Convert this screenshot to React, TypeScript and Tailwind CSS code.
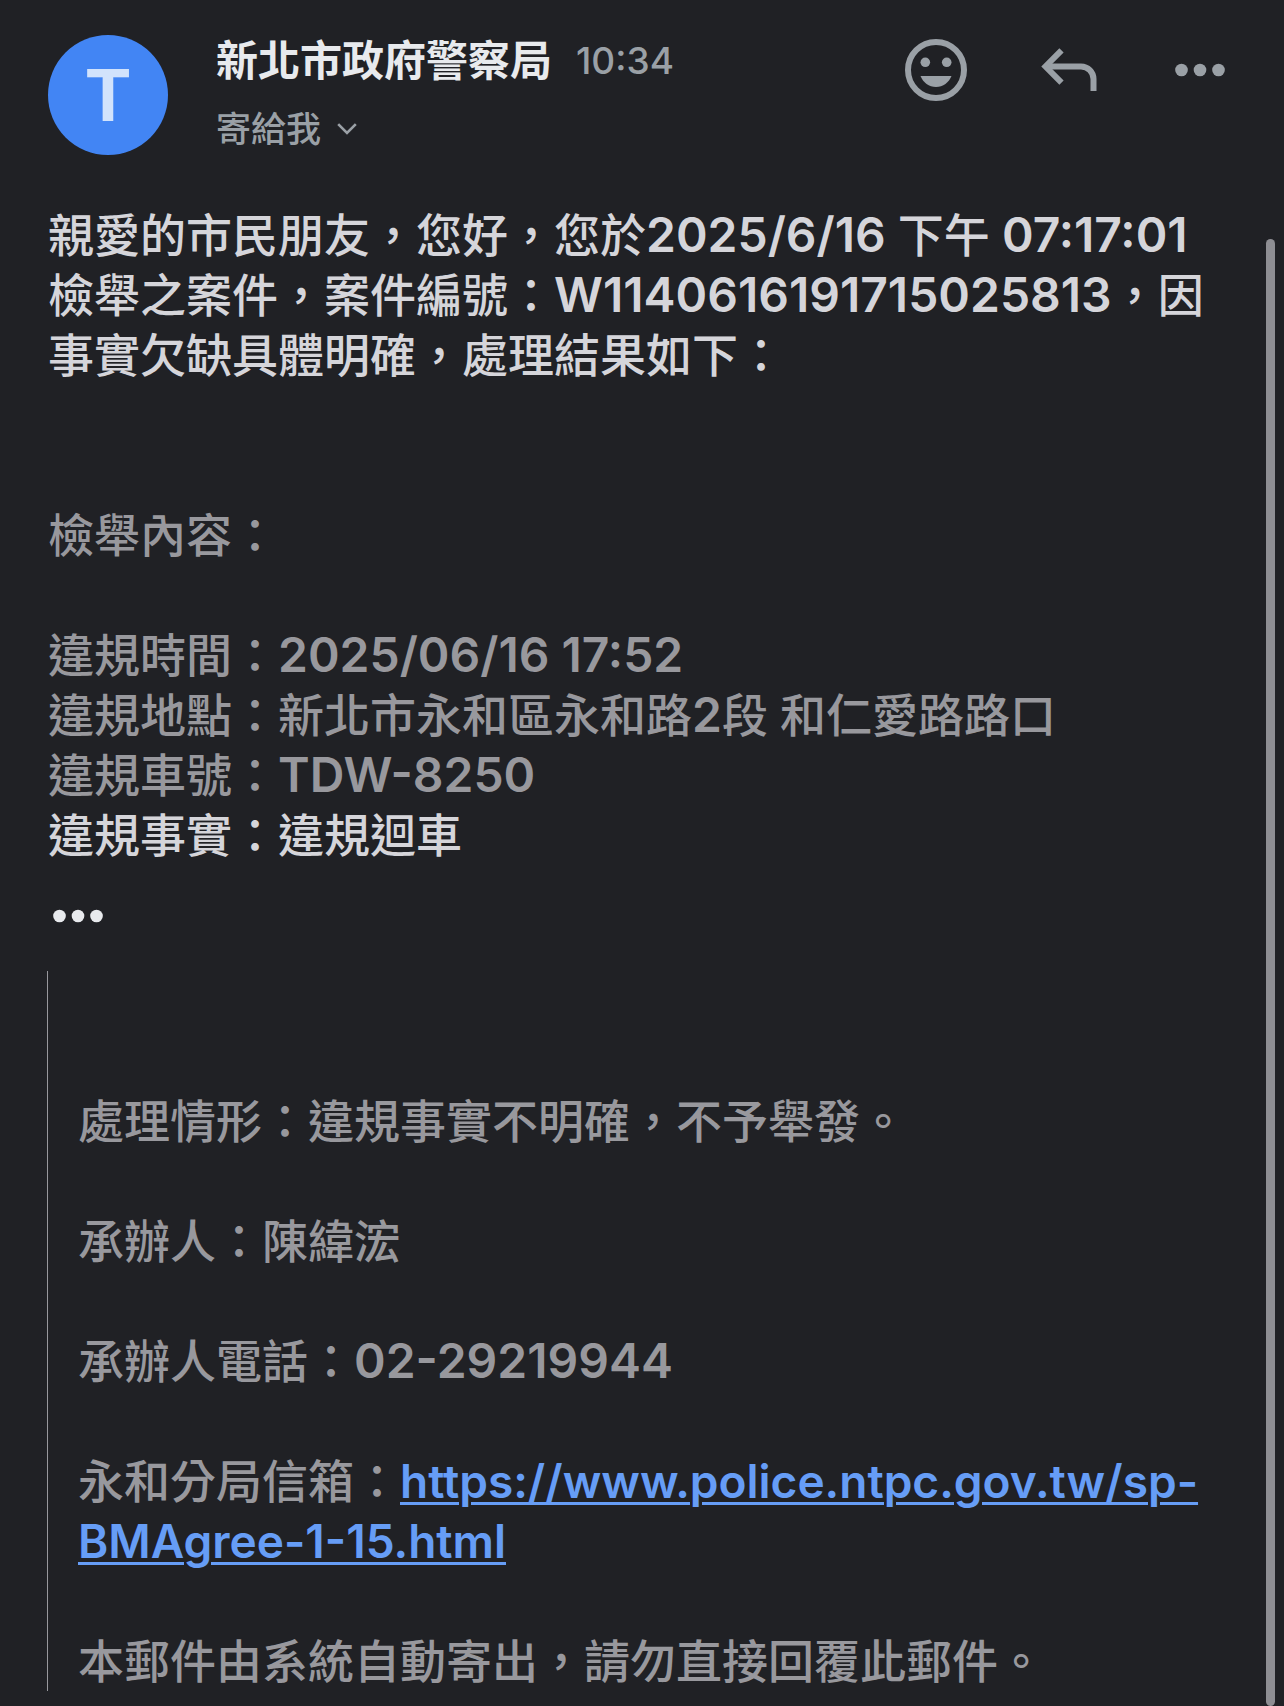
import type { ReactNode } from "react"

const SmileIcon = () => (
  <svg viewBox="0 0 62 62" className="size-[62px]" fill="currentColor" aria-hidden="true">
    <circle cx="31" cy="31" r="28" fill="none" stroke="currentColor" strokeWidth="6" />
    <circle cx="20.3" cy="23.3" r="4.8" />
    <circle cx="41.7" cy="23.3" r="4.8" />
    <path d="M15.5 37h31C44 43.500 38 48 31 48s-13-4.500-15.500-11z" />
  </svg>
)

const ReplyIcon = () => (
  <svg viewBox="0 0 56 44" className="h-[44px] w-[56px]" fill="none" stroke="currentColor" strokeWidth="6" aria-hidden="true">
    <path d="M20.500 2.300 4.500 18.500l16 16.200" />
    <path d="M4.500 18.500H40A12.500 12.500 0 0 1 52.500 31v12" />
  </svg>
)

const DotsIcon = ({ className }: { className?: string }) => (
  <svg viewBox="0 0 50 14" className={className} fill="currentColor" aria-hidden="true">
    <circle cx="6.500" cy="7" r="6.300" />
    <circle cx="25" cy="7" r="6.300" />
    <circle cx="43.500" cy="7" r="6.300" />
  </svg>
)

const ChevronIcon = () => (
  <svg viewBox="0 0 20 12" className="h-[12px] w-[20px]" fill="none" stroke="currentColor" strokeWidth="2.600" aria-hidden="true">
    <path d="M1.200 1.200 10 10l8.800-8.800" />
  </svg>
)

const Muted = ({ children }: { children: ReactNode }) => <p className="text-[#98989d]">{children}</p>

// dates, numbers and codes inside the Chinese text
const Num = ({ children }: { children: ReactNode }) => (
  <span className="text-[48px] leading-none font-semibold">{children}</span>
)

export default function App() {
  return (
    <div
      lang="zh-Hant"
      className="relative min-h-screen bg-[#202125] pb-[13px] font-['Inter','Noto_Sans_CJK_TC',sans-serif] font-medium text-[#d5d5da]"
    >
      <header className="flex items-start px-12 pt-[35px]">
        <div className="flex size-[120px] shrink-0 items-center justify-center rounded-full bg-[#4285f4] pt-1 font-['Roboto',sans-serif] text-[72px] leading-none font-bold text-[#d2e3fc]">
          T
        </div>
        <div className="ml-12 flex-1 pt-0.5">
          <div className="flex items-center gap-6 leading-[48px]">
            <h1 className="text-[42px] font-bold text-[#e8eaed]">新北市政府警察局</h1>
            <time className="text-[37px] text-[#9aa0a6]">10:34</time>
          </div>
          <button className="mt-5 flex items-center gap-4 text-[35px] leading-[48px] text-[#9aa0a6]">
            寄給我
            <ChevronIcon />
          </button>
        </div>
        <div className="flex items-center gap-[74px] pt-1 pr-[11px] text-[#9aa0a6]">
          <button aria-label="新增表情回應">
            <SmileIcon />
          </button>
          <button aria-label="回覆">
            <ReplyIcon />
          </button>
          <button aria-label="更多選項" className="pl-1">
            <DotsIcon className="h-[14px] w-[50px]" />
          </button>
        </div>
      </header>

      <main className="px-12 pt-[50px] text-[46px] leading-[60px]">
        <p>
          親愛的市民朋友，您好，您於<Num>2025/6/16 </Num>下午<Num> 07:17:01</Num>
          <br />
          檢舉之案件，案件編號：<Num>W1140616191715025813</Num>，因事實欠缺具體明確，處理結果如下：
        </p>

        <div className="pt-[120px]">
          <Muted>檢舉內容：</Muted>
        </div>

        <div className="pt-[60px]">
          <Muted>
            違規時間：<Num>2025/06/16 17:52</Num>
          </Muted>
          <Muted>
            違規地點：新北市永和區永和路<Num>2</Num>段<Num> </Num>和仁愛路路口
          </Muted>
          <Muted>
            違規車號：<Num>TDW-8250</Num>
          </Muted>
          <p>違規事實：違規迴車</p>
        </div>

        <button aria-label="顯示引用文字" className="mt-11 ml-1 block text-[#e8eaed]">
          <DotsIcon className="h-[14px] w-[52px]" />
        </button>

        <blockquote className="-ml-px mt-12 space-y-[60px] border-l border-[#98989d] pt-[120px] pl-[30px]">
          <Muted>處理情形：違規事實不明確，不予舉發。</Muted>
          <Muted>承辦人：陳緯浤</Muted>
          <Muted>
            承辦人電話：<Num>02-29219944</Num>
          </Muted>
          <Muted>
            永和分局信箱：
            <a
              href="https://www.police.ntpc.gov.tw/sp-BMAgree-1-15.html"
              className="leading-none font-semibold text-[#669df6] underline decoration-3 underline-offset-4"
            >
              https://www.police.ntpc.gov.tw/sp-BMAgree-1-15.html
            </a>
          </Muted>
          <Muted>本郵件由系統自動寄出，請勿直接回覆此郵件。</Muted>
        </blockquote>
      </main>

      <div className="absolute top-[239px] right-[9px] bottom-0 w-[9px] rounded-full bg-[#8e8e93]" />
    </div>
  )
}
